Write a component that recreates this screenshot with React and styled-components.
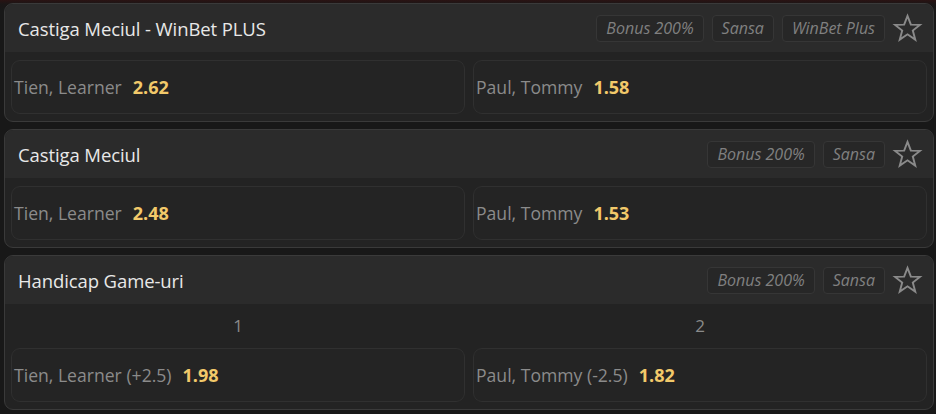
import React from 'react'
import styled, { createGlobalStyle } from 'styled-components'

const GlobalStyle = createGlobalStyle`
  html, body {
    margin: 0;
    padding: 0;
    background: #181818;
    font-family: "Open Sans", "Noto Sans", sans-serif;
  }
`

const Page = styled.div`
  width: 936px;
  height: 414px;
  overflow: hidden;
  box-sizing: border-box;
  padding: 3px 2px 0 4px;
  display: flex;
  flex-direction: column;
  gap: 7px;
  background: linear-gradient(to bottom, #2a1313 0px, #1b1616 4px, #181818 10px);
`

const Card = styled.section`
  border: 1px solid #3a3a3a;
  border-radius: 9px;
  overflow: hidden;
  background: #232323;
`

const Header = styled.header`
  height: 48px;
  background: #2b2b2b;
  display: flex;
  align-items: center;
  padding: 0 10px 0 13px;
  gap: 8px;
`

const Title = styled.h2`
  margin: 0;
  flex: 1;
  font-size: 18.5px;
  font-weight: 400;
  color: #e8e8e8;
  letter-spacing: -0.1px;
`

const Tag = styled.span`
  height: 27px;
  box-sizing: border-box;
  padding: 0 9px;
  display: flex;
  align-items: center;
  border: 1px solid #363636;
  border-radius: 4px;
  background: #272727;
  color: #808080;
  font-style: italic;
  font-size: 16px;
`

const Star = styled.svg`
  width: 31px;
  height: 31px;
  margin-left: -1px;
`

const Body = styled.div`
  padding: 8px 6px 7px 6px;
`

const Labels = styled.div`
  display: grid;
  grid-template-columns: 1fr 1fr;
  gap: 8px;
  height: 30px;
  align-items: center;
  margin-top: -2px;
  margin-bottom: 8px;
`

const Label = styled.span`
  text-align: center;
  color: #8a8a8a;
  font-size: 17px;
`

const Row = styled.div`
  display: grid;
  grid-template-columns: 1fr 1fr;
  gap: 8px;
`

const Odd = styled.button`
  height: 54px;
  box-sizing: border-box;
  display: flex;
  align-items: center;
  gap: 11px;
  padding: 0 2px;
  border: 1px solid #303030;
  border-radius: 9px;
  background: #242424;
  font-family: inherit;
  cursor: pointer;
`

const Name = styled.span`
  color: #8b8b8b;
  font-size: 17.6px;
`

const Price = styled.span`
  color: #f2c96a;
  font-weight: 700;
  font-size: 18px;
`

const StarIcon = () => (
  <Star viewBox="0 0 24 24" fill="none" stroke="#8a8a8a" strokeWidth="1.5" strokeLinejoin="miter">
    <path d="M12 2.2 L14.6 9 L21.6 9.2 L16.1 13.6 L18 20.6 L12 16.5 L6 20.6 L7.9 13.6 L2.4 9.2 L9.4 9 Z" />
  </Star>
)

const markets = [
  {
    title: 'Castiga Meciul - WinBet PLUS',
    tags: ['Bonus 200%', 'Sansa', 'WinBet Plus'],
    odds: [
      ['Tien, Learner', '2.62'],
      ['Paul, Tommy', '1.58'],
    ],
  },
  {
    title: 'Castiga Meciul',
    tags: ['Bonus 200%', 'Sansa'],
    odds: [
      ['Tien, Learner', '2.48'],
      ['Paul, Tommy', '1.53'],
    ],
  },
  {
    title: 'Handicap Game-uri',
    tags: ['Bonus 200%', 'Sansa'],
    labels: ['1', '2'],
    odds: [
      ['Tien, Learner (+2.5)', '1.98'],
      ['Paul, Tommy (-2.5)', '1.82'],
    ],
  },
]

export default function App() {
  return (
    <>
      <GlobalStyle />
      <Page>
        {markets.map((m) => (
          <Card key={m.title}>
            <Header>
              <Title>{m.title}</Title>
              {m.tags.map((t) => (
                <Tag key={t}>{t}</Tag>
              ))}
              <StarIcon />
            </Header>
            <Body>
              {m.labels && (
                <Labels>
                  {m.labels.map((l) => (
                    <Label key={l}>{l}</Label>
                  ))}
                </Labels>
              )}
              <Row>
                {m.odds.map(([name, price]) => (
                  <Odd key={name}>
                    <Name>{name}</Name>
                    <Price>{price}</Price>
                  </Odd>
                ))}
              </Row>
            </Body>
          </Card>
        ))}
      </Page>
    </>
  )
}
